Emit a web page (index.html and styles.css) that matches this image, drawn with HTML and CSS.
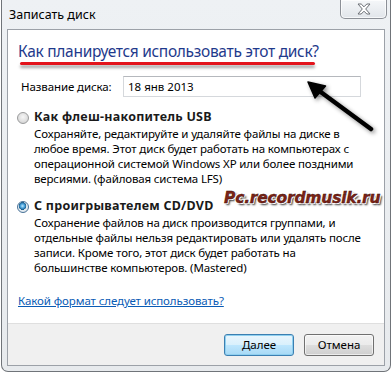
FILE: index.html
```html
<!DOCTYPE html>
<html lang="ru">
<head>
<meta charset="utf-8">
<link rel="stylesheet" href="styles.css">
</head>
<body>
<div class="window">
  <div class="titlebar">
    <span class="title">Записать диск</span>
    <div class="close">
      <svg width="18" height="12" viewBox="0 0 18 12"><path d="M3 1h3.2l2.8 2.8 2.8-2.8H15l-4.3 5 4.3 5h-3.2L9 8.2 6.2 11H3l4.3-5z" fill="#fff" stroke="#6b6f75" stroke-width="1" stroke-linejoin="round"/></svg>
    </div>
  </div>
  <div class="client">
    <div class="content">
      <h1 class="heading">Как планируется использовать этот диск?</h1>
      <div class="name-row">
        <span class="name-label">Название диска:</span>
        <div class="input">18 янв 2013</div>
      </div>
      <div class="option">
        <span class="radio"></span>
        <div class="option-body">
          <div class="option-title">Как флеш-накопитель USB</div>
          <p class="option-text">Сохраняйте, редактируйте и удаляйте файлы на диске в<br>любое время. Этот диск будет работать на компьютерах с<br>операционной системой Windows XP или более поздними<br>версиями. (файловая система LFS)</p>
        </div>
      </div>
      <div class="option second">
        <span class="radio checked"></span>
        <div class="option-body">
          <div class="option-title">С проигрывателем CD/DVD</div>
          <p class="option-text">Сохранение файлов на диск производится группами, и<br>отдельные файлы нельзя редактировать или удалять после<br>записи. Кроме того, этот диск будет работать на<br>большинстве компьютеров. (Mastered)</p>
        </div>
      </div>
      <a class="link" href="#">Какой формат следует использовать?</a>
    </div>
    <div class="footer">
      <button class="btn default">Далее</button>
      <button class="btn">Отмена</button>
    </div>
  </div>
  <div class="red-line"></div>
  <svg class="arrow" width="80" height="64" viewBox="0 0 80 64">
    <line x1="16" y1="14" x2="69" y2="53" stroke="#000" stroke-width="4.5" stroke-linecap="round"/>
    <path d="M6 6 L23.5 10 L13 22 Z" fill="#000" stroke="#000" stroke-width="1.5" stroke-linejoin="round"/>
  </svg>
  <div class="watermark">Pc.recordmusik.ru</div>
</div>
</body>
</html>
```
FILE: styles.css
```css
html, body {
  margin: 0;
  padding: 0;
  background: #ffffff;
}
body {
  width: 392px;
  height: 372px;
  overflow: hidden;
  font-family: "Noto Sans", "Open Sans", sans-serif;
}
.window {
  position: relative;
  box-sizing: border-box;
  width: 390px;
  height: 372px;
  margin-left: 1px;
  border: 1px solid #707479;
  border-top: none;
  border-radius: 0 0 7px 7px;
  background: linear-gradient(#eef1f4, #e7eaed);
  display: flex;
  flex-direction: column;
}
.titlebar {
  height: 29px;
  flex: none;
  display: flex;
  align-items: flex-start;
  justify-content: space-between;
}
.title {
  font-size: 12.5px;
  line-height: 16px;
  color: #000;
  padding: 7px 0 0 7px;
}
.close {
  width: 47px;
  height: 19px;
  margin-right: 3px;
  box-sizing: border-box;
  border: 1px solid #8c9097;
  border-top: none;
  border-radius: 0 0 5px 5px;
  background: linear-gradient(#f5f7f9, #e1e5ea);
  box-shadow: inset 0 0 0 1px rgba(255, 255, 255, 0.7);
  display: flex;
  align-items: center;
  justify-content: center;
}
.client {
  flex: 1;
  margin: 0 5px 5px 5px;
  border: 1px solid #9ca1a8;
  display: flex;
  flex-direction: column;
  background: #fff;
}
.content {
  flex: 1;
  padding: 10px 10px 0 10px;
  display: flex;
  flex-direction: column;
}
.heading {
  margin: 0;
  font-size: 15.5px;
  font-weight: normal;
  color: #1f3a8c;
  line-height: 22px;
  letter-spacing: -0.3px;
  white-space: nowrap;
}
.name-row {
  display: flex;
  align-items: center;
  margin-top: 14px;
  margin-left: 3px;
}
.name-label {
  font-size: 11.5px;
  letter-spacing: -0.1px;
  width: 102px;
  color: #000;
}
.input {
  box-sizing: border-box;
  width: 238px;
  height: 21px;
  border: 1px solid #d5d8dc;
  border-top-color: #b5b8bd;
  font-size: 11.5px;
  line-height: 19px;
  padding-left: 4px;
  color: #000;
}
.option {
  display: flex;
  align-items: flex-start;
  margin-top: 11px;
  margin-left: -1px;
}
.option.second {
  margin-top: 11px;
}
.radio {
  width: 10px;
  height: 10px;
  border-radius: 50%;
  border: 1px solid #9a9b9c;
  background: radial-gradient(circle at 50% 40%, #f6f6f6 0%, #e0e0e0 55%, #c9c9c9 100%);
  margin: 4px 5px 0 0;
  flex: none;
}
.radio.checked {
  border-color: #4a7398;
  background: radial-gradient(circle at 45% 40%, #bfe6fb 0%, #4aa3dc 25%, #1c5d8c 45%, #e9f0f5 50%, #cbd7e0 100%);
}
.option-body {
  flex: 1;
}
.option-title {
  font-size: 12.5px;
  font-weight: bold;
  line-height: 17px;
  letter-spacing: 0.25px;
  color: #1a1a1a;
  white-space: nowrap;
}
.option-text {
  margin: 1px 0 0 0;
  font-size: 11.5px;
  letter-spacing: -0.15px;
  line-height: 15px;
  color: #000;
  white-space: nowrap;
}
.link {
  margin-top: 17px;
  font-size: 11.5px;
  line-height: 17px;
  color: #0a5bb5;
  text-decoration: underline;
  align-self: flex-start;
  letter-spacing: -0.1px;
}
.footer {
  height: 42px;
  flex: none;
  box-sizing: border-box;
  background: #f0f0f0;
  border-top: 1px solid #dfdfdf;
  display: flex;
  justify-content: flex-end;
  align-items: center;
  gap: 10px;
  padding-right: 10px;
}
.btn {
  width: 70px;
  height: 22px;
  box-sizing: border-box;
  border: 1px solid #707070;
  border-radius: 3px;
  background: linear-gradient(#f2f2f2 0%, #ebebeb 50%, #dddddd 51%, #cfcfcf 100%);
  box-shadow: inset 0 0 0 1px rgba(255, 255, 255, 0.6);
  font-family: "Noto Sans", "Open Sans", sans-serif;
  font-size: 11.5px;
  color: #000;
  padding: 0;
}
.btn.default {
  border-color: #3c7fb1;
  background: linear-gradient(#eaf6fd 0%, #d9f0fc 50%, #bee6fd 51%, #a7d9f5 100%);
  box-shadow: inset 0 0 0 1px #8fd0f0;
}
.red-line {
  position: absolute;
  left: 18px;
  top: 62px;
  width: 295px;
  height: 3px;
  background: #e3141c;
  border-radius: 2px;
  box-shadow: 0 3px 3px rgba(0, 0, 0, 0.35);
}
.arrow {
  position: absolute;
  left: 300px;
  top: 76px;
  filter: drop-shadow(2px 2px 2px rgba(0, 0, 0, 0.45));
}
.watermark {
  position: absolute;
  left: 222px;
  top: 188px;
  font-family: "DejaVu Sans", sans-serif;
  font-weight: bold;
  font-style: italic;
  font-size: 15.5px;
  line-height: 20px;
  letter-spacing: -0.2px;
  color: #7d2416;
  -webkit-text-stroke: 0.4px #3b0e08;
  text-shadow: 1px 1px 0 #fff, -1px -1px 0 #fff, 1px -1px 0 #fff, -1px 1px 0 #fff, 2px 2px 2px #333;
}
```
